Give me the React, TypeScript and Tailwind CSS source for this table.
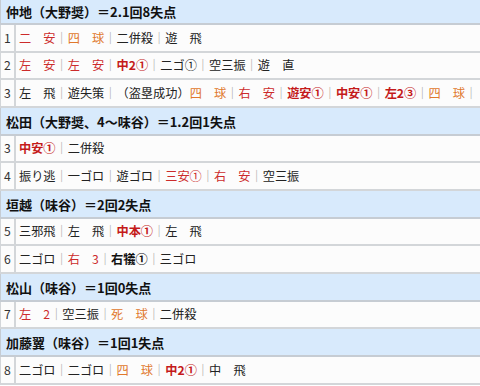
import React from "react";

type Part = [string, "n" | "r" | "o" | "R" | "B"];
type Row =
  | { kind: "head"; title: string; h: string }
  | { kind: "ab"; no: string; cells: Part[][]; trail?: boolean; h: string };

const tone: Record<Part[1], string> = {
  n: "text-[#222]",
  r: "text-[#cc2b2b]",
  o: "text-[#e0782c]",
  R: "text-[#c41a1a] font-bold",
  B: "text-[#111] font-bold",
};

const rows: Row[] = [
  { kind: "head", title: "仲地（大野奨）＝2.1回8失点", h: "h-[25px]" },
  { kind: "ab", no: "1", h: "h-[28px]", cells: [[["二　安", "r"]], [["四　球", "o"]], [["二併殺", "n"]], [["遊　飛", "n"]]] },
  {
    kind: "ab", no: "2", h: "h-[27px]",
    cells: [[["左　安", "r"]], [["左　安", "r"]], [["中2①", "R"]], [["二ゴ①", "n"]], [["空三振", "n"]], [["遊　直", "n"]]],
  },
  {
    kind: "ab", no: "3", h: "h-[28px]", trail: true,
    cells: [
      [["左　飛", "n"]],
      [["遊失策", "n"]],
      [["（盗塁成功）", "n"], ["四　球", "o"]],
      [["右　安", "r"]],
      [["遊安①", "R"]],
      [["中安①", "R"]],
      [["左2③", "R"]],
      [["四　球", "o"]],
    ],
  },
  { kind: "head", title: "松田（大野奨、4～味谷）＝1.2回1失点", h: "h-[28px]" },
  { kind: "ab", no: "3", h: "h-[27px]", cells: [[["中安①", "R"]], [["二併殺", "n"]]] },
  {
    kind: "ab", no: "4", h: "h-[28px]",
    cells: [[["振り逃", "n"]], [["一ゴロ", "n"]], [["遊ゴロ", "n"]], [["三安①", "r"]], [["右　安", "r"]], [["空三振", "n"]]],
  },
  { kind: "head", title: "垣越（味谷）＝2回2失点", h: "h-[28px]" },
  { kind: "ab", no: "5", h: "h-[27px]", cells: [[["三邪飛", "n"]], [["左　飛", "n"]], [["中本①", "R"]], [["左　飛", "n"]]] },
  { kind: "ab", no: "6", h: "h-[28px]", cells: [[["二ゴロ", "n"]], [["右　3", "r"]], [["右犠①", "B"]], [["三ゴロ", "n"]]] },
  { kind: "head", title: "松山（味谷）＝1回0失点", h: "h-[28px]" },
  { kind: "ab", no: "7", h: "h-[27px]", cells: [[["左　2", "r"]], [["空三振", "n"]], [["死　球", "o"]], [["二併殺", "n"]]] },
  { kind: "head", title: "加藤翼（味谷）＝1回1失点", h: "h-[28px]" },
  {
    kind: "ab", no: "8", h: "h-[28px]",
    cells: [[["二ゴロ", "n"]], [["二ゴロ", "n"]], [["四　球", "o"]], [["中2①", "R"]], [["中　飛", "n"]]],
  },
];

const Sep = () => <span className="text-[#a0a0a0]">｜</span>;

export default function App() {
  return (
    <div
      className="w-[480px] h-[386px] overflow-hidden bg-white text-[12.2px] leading-none"
      style={{ fontFamily: '"Noto Sans CJK JP", "Noto Sans", sans-serif' }}
    >
      {rows.map((row, i) =>
        row.kind === "head" ? (
          <div
            key={i}
            className={`${row.h} flex items-center border-l border-b-2 border-[#c6ccd3] bg-[#d8eafc] pl-[5px] font-bold text-[#111] text-[13px] whitespace-nowrap`}
          >
            {row.title}
          </div>
        ) : (
          <div key={i} className={`${row.h} flex border-l border-b-2 border-[#d3d6d9] bg-[#fcfcfc]`}>
            <div className="w-[15px] shrink-0 flex items-center justify-center border-r-2 border-[#d3d6d9] text-[#333]">
              {row.no}
            </div>
            <div className="flex items-center pl-[3px] whitespace-nowrap">
              {row.cells.map((cell, j) => (
                <React.Fragment key={j}>
                  {j > 0 && <Sep />}
                  {cell.map(([t, c], k) => (
                    <span key={k} className={tone[c]}>
                      {t}
                    </span>
                  ))}
                </React.Fragment>
              ))}
              {row.trail && <Sep />}
            </div>
          </div>
        )
      )}
    </div>
  );
}
